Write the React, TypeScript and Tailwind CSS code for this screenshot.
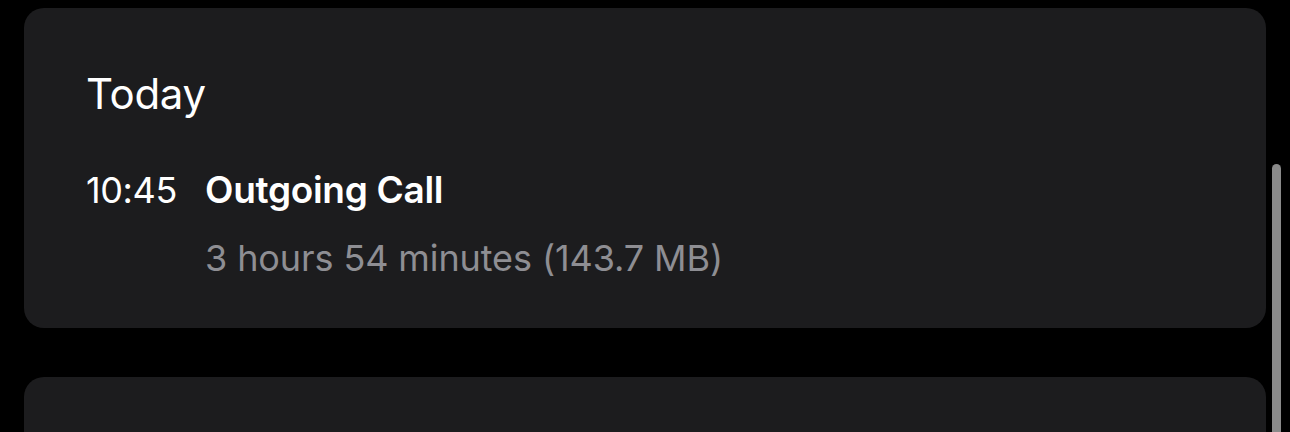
const font = { fontFamily: '"Inter", "Noto Sans", sans-serif' };

function CallEntry() {
  return (
    <div className="flex">
      <div className="w-[119px] shrink-0 text-[36px] leading-[40px] text-white tracking-[-0.4px]">10:45</div>
      <div className="flex flex-col">
        <div className="text-[37px] leading-[40px] font-semibold text-white tracking-[-0.3px]">
          Outgoing Call
        </div>
        <div className="mt-[28px] text-[36px] leading-[40px] text-[#8e8e93] tracking-[-0.1px]">
          3 hours 54 minutes (143.7 MB)
        </div>
      </div>
    </div>
  );
}

export default function App() {
  return (
    <div className="w-[1290px] h-[432px] overflow-hidden bg-black flex" style={font}>
      <div className="ml-6 mt-2 w-[1242px] shrink-0 flex flex-col gap-[49px]">
        <section className="h-[320px] shrink-0 rounded-[20px] bg-[#1c1c1e] pl-[62px] pt-[62px]">
          <h2 className="text-[42px] leading-[48px] text-white tracking-[-0.3px]">Today</h2>
          <div className="mt-[52px]">
            <CallEntry />
          </div>
        </section>
        <section className="h-[200px] shrink-0 rounded-[20px] bg-[#1c1c1e]" />
      </div>
      <div className="ml-[6px] mt-[164px] w-[9px] h-[300px] shrink-0 rounded-full bg-[#8a8a8a]" />
    </div>
  );
}
